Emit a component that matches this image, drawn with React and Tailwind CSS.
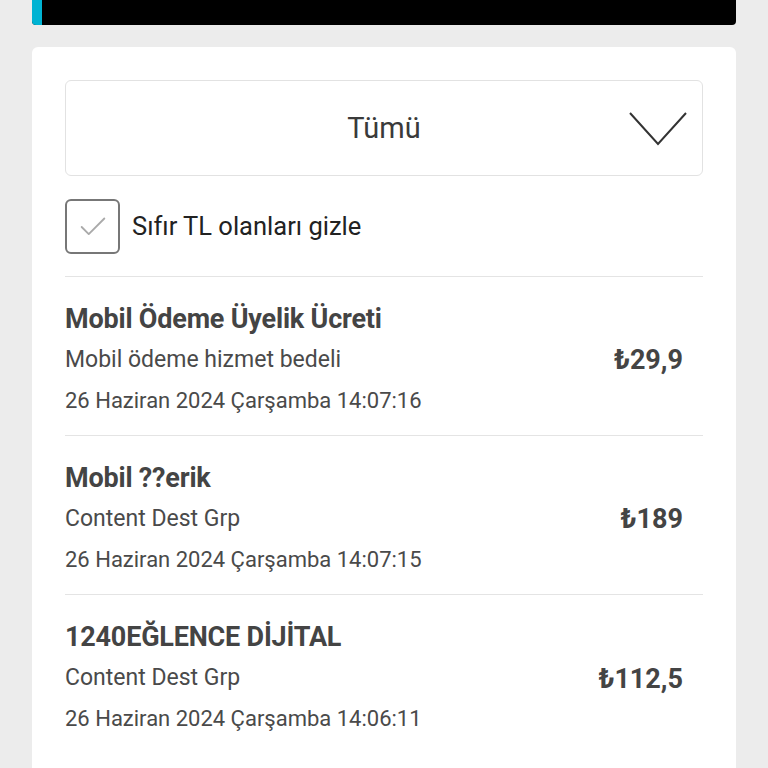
import { Check } from "lucide-react";

const rows = [
  { title: "Mobil Ödeme Üyelik Ücreti", sub: "Mobil ödeme hizmet bedeli", date: "26 Haziran 2024 Çarşamba 14:07:16", price: "₺29,9" },
  { title: "Mobil ??erik", sub: "Content Dest Grp", date: "26 Haziran 2024 Çarşamba 14:07:15", price: "₺189" },
  { title: "1240EĞLENCE DİJİTAL", sub: "Content Dest Grp", date: "26 Haziran 2024 Çarşamba 14:06:11", price: "₺112,5" },
];

export default function App() {
  return (
    <div className="min-h-[768px] bg-[#ececec] px-8 overflow-hidden" style={{ fontFamily: "Roboto, 'Noto Sans', sans-serif" }}>
      <div className="flex h-[25px] bg-black rounded-b-sm overflow-hidden">
        <div className="w-[10px] bg-[#00b3d3]" />
      </div>
      <div className="mt-[22px] bg-white rounded-t-md px-[33px] pt-[33px] pb-10">
        <div className="relative h-[96px] border border-[#e2e2e2] rounded-md flex items-center justify-center">
          <span className="text-[29px] text-[#3a3a3a] mt-[2px]">Tümü</span>
          <svg className="absolute right-[15px] top-[31px]" width="58" height="34" viewBox="0 0 58 34" fill="none">
            <path d="M1 1 L29 32 L57 1" stroke="#333" strokeWidth="2" />
          </svg>
        </div>
        <div className="flex items-center gap-3 mt-[23px] pb-[22px] border-b border-[#e4e4e4]">
          <div className="w-[55px] h-[55px] border-2 border-[#777] rounded-md flex items-center justify-center">
            <Check size={34} strokeWidth={1.3} color="#aaa" />
          </div>
          <span className="text-[25.5px] text-[#222]">Sıfır TL olanları gizle</span>
        </div>
        <div className="divide-y divide-[#e4e4e4]">
          {rows.map((r) => (
            <div key={r.date} className="flex items-center justify-between pt-[21px] pb-[12px] h-[159px]">
              <div className="flex flex-col">
                <span className="text-[27px] font-bold leading-[36px] text-[#444] tracking-[-0.2px]">{r.title}</span>
                <span className="text-[23px] leading-[42px] mt-[2px] text-[#4a4a4a]">{r.sub}</span>
                <span className="text-[22px] leading-[40px] text-[#4a4a4a]">{r.date}</span>
              </div>
              <span className="text-[27px] font-bold text-[#444] mr-5">{r.price}</span>
            </div>
          ))}
        </div>
      </div>
    </div>
  );
}
